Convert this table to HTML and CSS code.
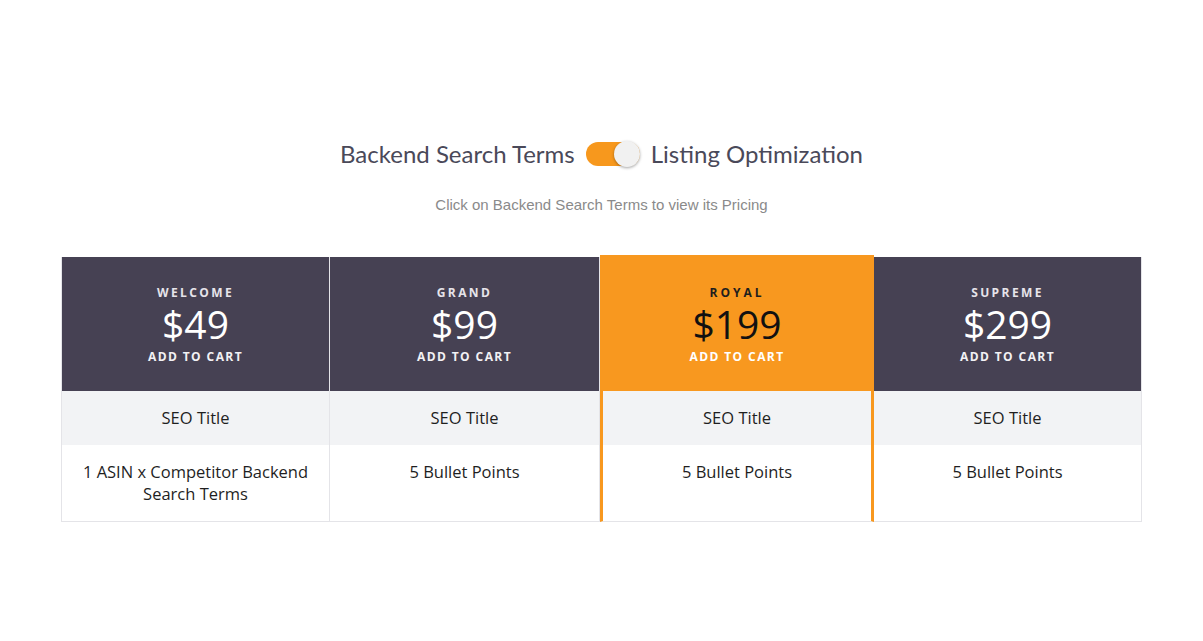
FILE: index.html
```html
<!DOCTYPE html>
<html>
<head>
<meta charset="utf-8">
<link rel="stylesheet" href="styles.css">
</head>
<body>
<div class="page">
  <div class="switch-row">
    <span class="switch-label">Backend Search Terms</span>
    <span class="switch"><span class="knob"></span></span>
    <span class="switch-label">Listing Optimization</span>
  </div>
  <p class="hint">Click on Backend Search Terms to view its Pricing</p>
  <div class="table">
    <div class="col col-first">
      <div class="head">
        <div class="plan">WELCOME</div>
        <div class="price">$49</div>
        <div class="cart">ADD TO CART</div>
      </div>
      <div class="row row-gray">SEO Title</div>
      <div class="row row-white">1 ASIN x Competitor Backend Search Terms</div>
    </div>
    <div class="col">
      <div class="head">
        <div class="plan">GRAND</div>
        <div class="price">$99</div>
        <div class="cart">ADD TO CART</div>
      </div>
      <div class="row row-gray">SEO Title</div>
      <div class="row row-white">5 Bullet Points</div>
    </div>
    <div class="col col-featured">
      <div class="head">
        <div class="plan">ROYAL</div>
        <div class="price">$199</div>
        <div class="cart">ADD TO CART</div>
      </div>
      <div class="row row-gray">SEO Title</div>
      <div class="row row-white">5 Bullet Points</div>
    </div>
    <div class="col">
      <div class="head">
        <div class="plan">SUPREME</div>
        <div class="price">$299</div>
        <div class="cart">ADD TO CART</div>
      </div>
      <div class="row row-gray">SEO Title</div>
      <div class="row row-white">5 Bullet Points</div>
    </div>
  </div>
</div>
</body>
</html>
```

FILE: styles.css
```css
html, body {
  margin: 0;
  padding: 0;
  background: #ffffff;
}

.page {
  padding-top: 139px;
  font-family: "Open Sans", "Liberation Sans", sans-serif;
}

.switch-row {
  display: flex;
  justify-content: center;
  align-items: center;
  gap: 11px;
  height: 30px;
}

.switch-label {
  font-family: Lato, "Liberation Sans", sans-serif;
  font-size: 24px;
  color: #4a4959;
  line-height: 30px;
}

.switch {
  position: relative;
  display: inline-block;
  width: 54px;
  height: 24px;
  border-radius: 12px;
  background: #f7981d;
}

.knob {
  position: absolute;
  right: 0;
  top: -1px;
  width: 26px;
  height: 26px;
  border-radius: 50%;
  background: #f1f1f1;
  box-shadow: 0 1px 3px rgba(0, 0, 0, 0.35);
}

.hint {
  margin: 26px 0 0;
  text-align: center;
  font-family: "Liberation Sans", Arial, sans-serif;
  font-size: 15px;
  line-height: 20px;
  color: #8a8a8a;
}

.table {
  width: 1081px;
  margin: 42px auto 0;
  display: grid;
  grid-template-columns: 269px 270px 274px 268px;
}

.col {
  display: flex;
  flex-direction: column;
  border-right: 1px solid #e4e4e8;
  text-align: center;
}

.col-first {
  border-left: 1px solid #e4e4e8;
}

.head {
  background: #464153;
  padding: 28px 0 26px;
  color: #ffffff;
}

.plan {
  font-size: 12px;
  font-weight: 700;
  letter-spacing: 2.4px;
  line-height: 16px;
  color: #e6e4ea;
}

.price {
  margin-top: 3px;
  font-size: 39px;
  line-height: 40px;
  font-weight: 400;
}

.cart {
  margin-top: 5px;
  font-size: 12px;
  font-weight: 700;
  letter-spacing: 1.4px;
  line-height: 16px;
  color: #f2f1f4;
}

.row {
  font-size: 16.5px;
  color: #1f1f1f;
  line-height: 22px;
  padding: 0 16px;
}

.row-gray {
  background: #f2f3f5;
  height: 54px;
  display: flex;
  align-items: center;
  justify-content: center;
}

.row-white {
  background: #ffffff;
  box-sizing: border-box;
  padding-top: 16px;
  border-bottom: 1px solid #e4e4e8;
  height: 77px;
}

.col-featured {
  margin-top: -2px;
  border-right: none;
}

.col-featured .head {
  background: #f8981f;
  padding-top: 30px;
}

.col-featured .plan {
  color: #1e1e1e;
  letter-spacing: 3px;
}

.col-featured .price {
  color: #111111;
}

.col-featured .cart {
  color: #ffffff;
}

.col-featured .row {
  border-left: 3px solid #f8981f;
  border-right: 3px solid #f8981f;
}
```
